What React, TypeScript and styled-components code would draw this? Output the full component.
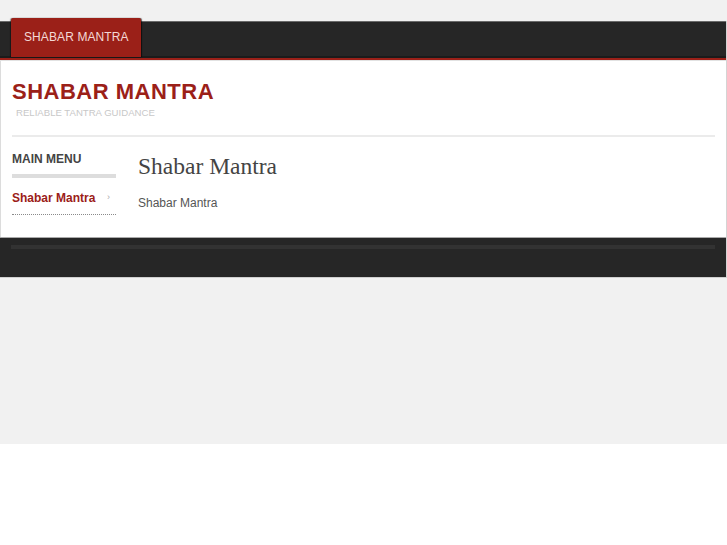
import styled, { createGlobalStyle } from "styled-components";

const GlobalStyle = createGlobalStyle`
  html {
    background: #ffffff;
  }
  body {
    margin: 0;
    font-family: "Liberation Sans", Arial, sans-serif;
    color: #555;
  }
`;

const Page = styled.div`
  background: #f1f1f1;
  padding: 21px 0 166px;
`;

const Wrapper = styled.div`
  width: 100%;
  box-sizing: border-box;
  border-right: 1px solid #d4d4d4;
`;

const NavBar = styled.nav`
  height: 34px;
  background: #262626;
  border-top: 1px solid #6a6a6a;
  border-bottom: 2px solid #1b1b1b;
  box-shadow: 0 2px 0 #9b2018, 0 3px 0 #e2e2e2;
  position: relative;
  z-index: 1;
  padding-left: 11px;
  display: flex;
  align-items: flex-end;
`;

const Tab = styled.a`
  display: flex;
  align-items: center;
  box-sizing: border-box;
  height: 39px;
  margin-bottom: -1px;
  padding: 0 12px 2px 13px;
  background: #9b2018;
  border-radius: 2px 2px 0 0;
  box-shadow: 1px 0 1px rgba(0, 0, 0, 0.6), -1px 0 1px rgba(0, 0, 0, 0.4);
  color: #f4d9d6;
  font-size: 12px;
  letter-spacing: 0.1px;
  text-decoration: none;
  text-transform: uppercase;
`;

const Content = styled.div`
  background: #fff;
  border-left: 1px solid #dcdcdc;
  padding: 21px 11px 22px;
`;

const Header = styled.header`
  padding-bottom: 17px;
  border-bottom: 2px solid #ebebeb;
`;

const SiteTitle = styled.h1`
  margin: 0;
  font-size: 22px;
  line-height: 26px;
  letter-spacing: 0.5px;
  font-weight: bold;
  color: #9b2018;
  text-transform: uppercase;
`;

const Tagline = styled.p`
  margin: 2px 0 0 4px;
  font-size: 9.6px;
  line-height: 11px;
  color: #c8c8c8;
  text-transform: uppercase;
`;

const Columns = styled.div`
  display: flex;
  gap: 22px;
  padding-top: 15px;
`;

const Sidebar = styled.aside`
  width: 104px;
  flex-shrink: 0;
`;

const MenuTitle = styled.h3`
  margin: 0;
  padding-bottom: 7px;
  border-bottom: 4px solid #dddddd;
  font-size: 12px;
  line-height: 15px;
  font-weight: bold;
  color: #444;
  text-transform: uppercase;
`;

const MenuItem = styled.a<{ $active?: boolean }>`
  display: flex;
  justify-content: space-between;
  align-items: center;
  margin-top: 11px;
  padding: 2px 6px 8px 0;
  border-bottom: 1px dotted #8a8a8a;
  font-size: 12px;
  line-height: 15px;
  font-weight: bold;
  color: ${(p) => (p.$active ? "#9b2018" : "#444")};
  text-decoration: none;
`;

const Arrow = styled.span`
  font-size: 9px;
  font-weight: normal;
  color: #aaa;
  margin-top: -3px;
`;

const Main = styled.main`
  flex: 1;
`;

const PageTitle = styled.h2`
  margin: 0;
  font-family: "Liberation Serif", "Times New Roman", serif;
  font-weight: normal;
  font-size: 23.5px;
  line-height: 28px;
  color: #444;
`;

const Body = styled.p`
  margin: 16px 0 0;
  font-size: 12px;
  line-height: 15px;
  color: #555;
`;

const Footer = styled.footer`
  background: #262626;
  border-top: 1px solid #aaaaaa;
  border-bottom: 1px solid #d0d0d0;
  height: 41px;
  box-sizing: border-box;
  padding: 7px 11px 0;
`;

const FooterRule = styled.div`
  height: 4px;
  background: #323232;
`;

export default function App() {
  return (
    <>
      <GlobalStyle />
      <Page>
        <Wrapper>
          <NavBar>
            <Tab href="#">Shabar Mantra</Tab>
          </NavBar>
          <Content>
            <Header>
              <SiteTitle>Shabar Mantra</SiteTitle>
              <Tagline>Reliable Tantra Guidance</Tagline>
            </Header>
            <Columns>
              <Sidebar>
                <MenuTitle>Main Menu</MenuTitle>
                <MenuItem href="#" $active>
                  Shabar Mantra
                  <Arrow>›</Arrow>
                </MenuItem>
              </Sidebar>
              <Main>
                <PageTitle>Shabar Mantra</PageTitle>
                <Body>Shabar Mantra</Body>
              </Main>
            </Columns>
          </Content>
          <Footer>
            <FooterRule />
          </Footer>
        </Wrapper>
      </Page>
    </>
  );
}
